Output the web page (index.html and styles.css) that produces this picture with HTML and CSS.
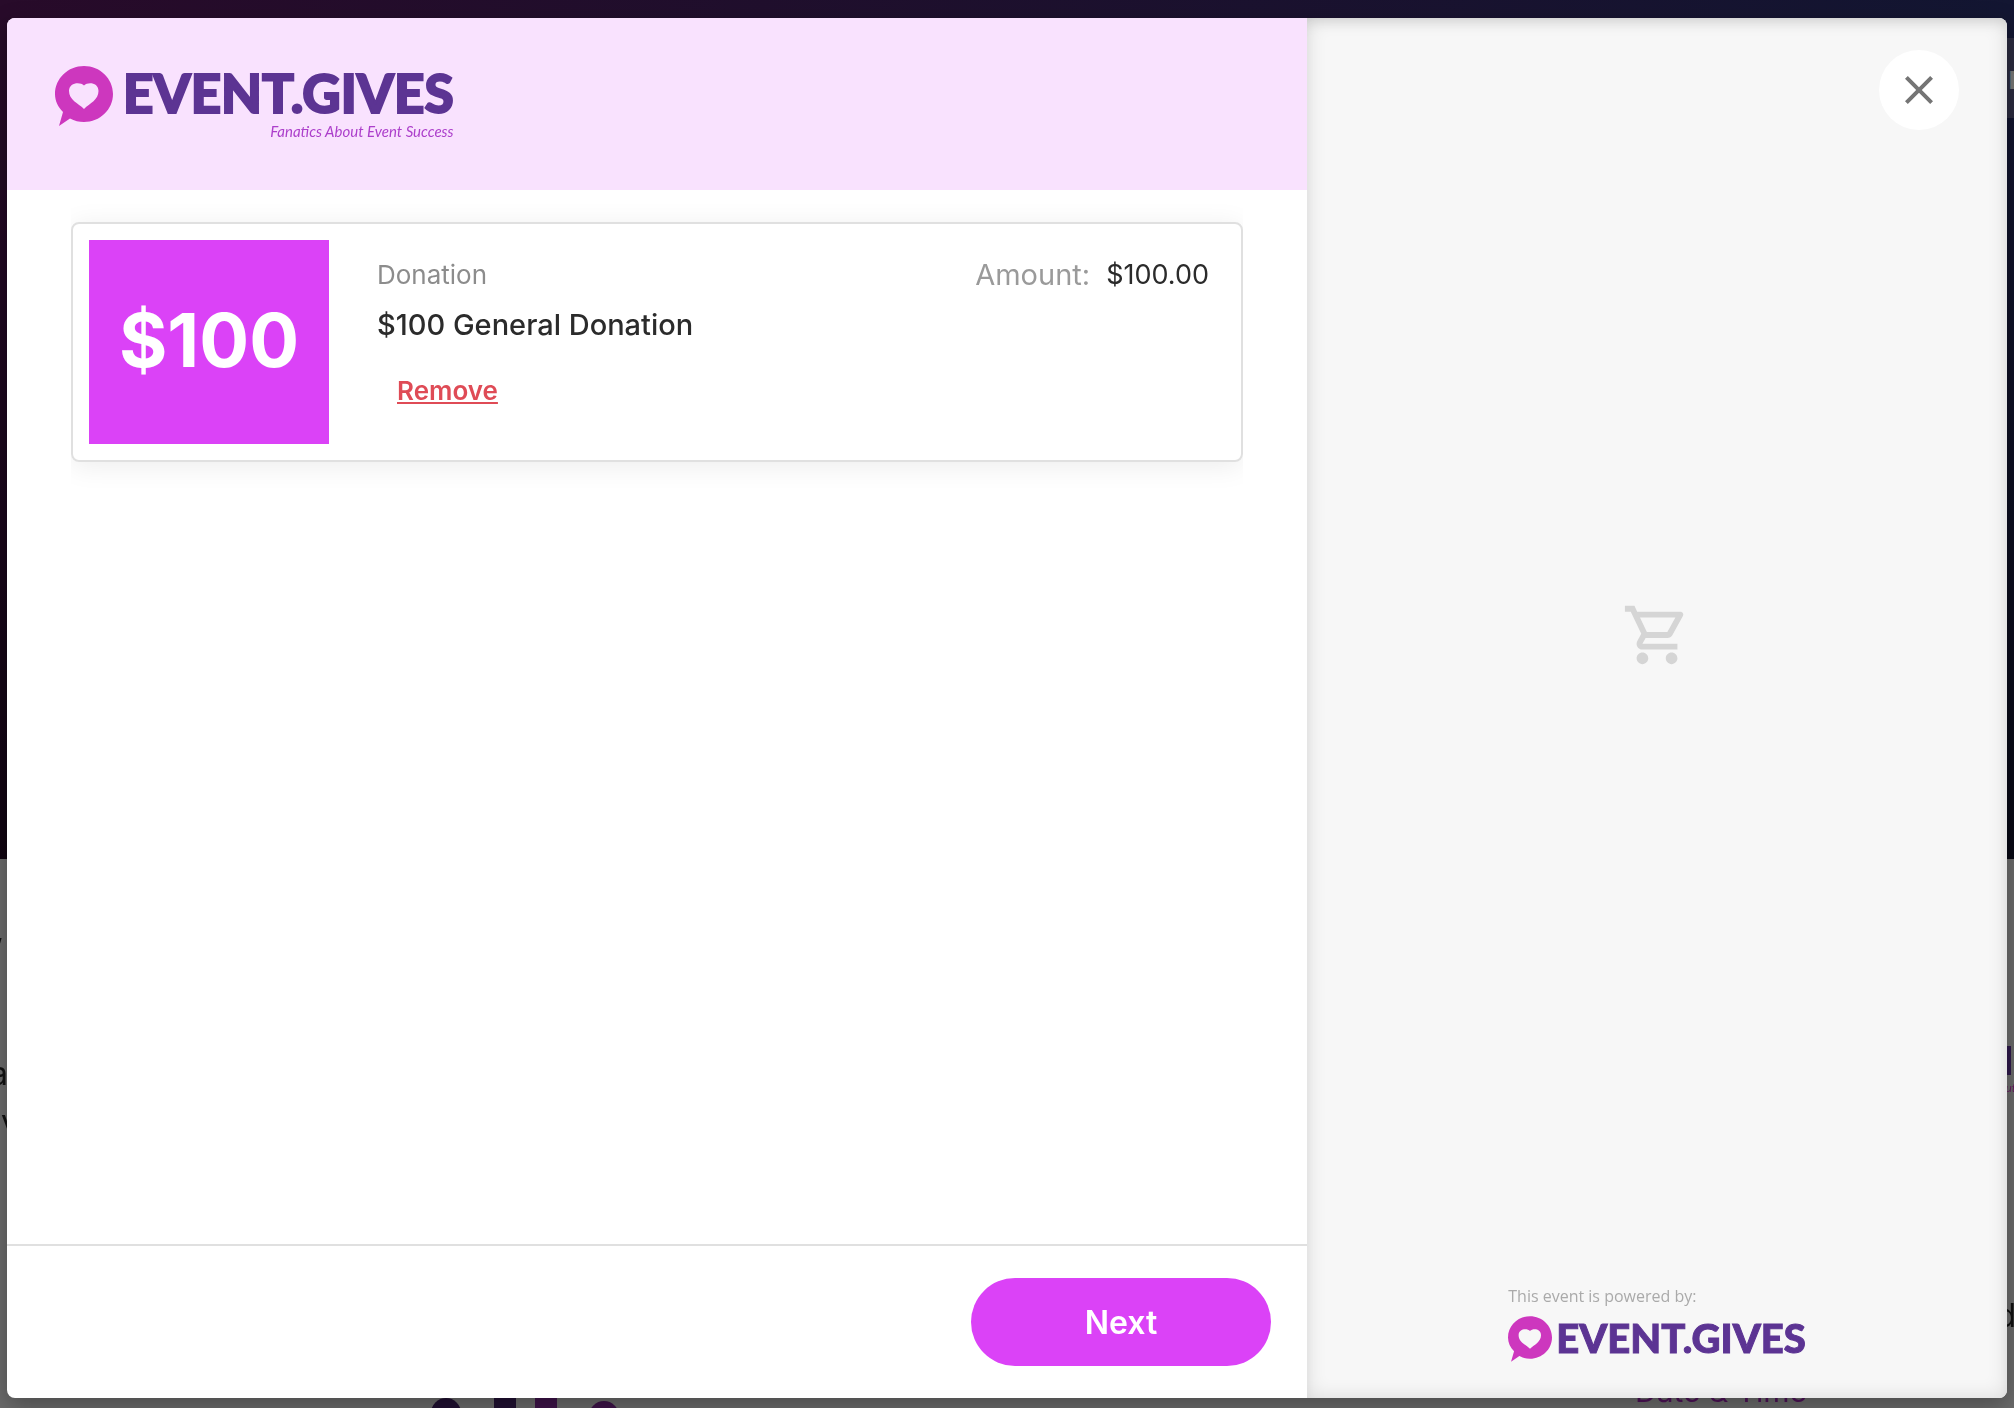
FILE: index.html
```html
<!DOCTYPE html>
<html lang="en">
<head>
<meta charset="utf-8">
<meta name="viewport" content="width=device-width, initial-scale=1">
<title>Cart – Event.Gives</title>
<link rel="stylesheet" href="styles.css">
</head>
<body>
<svg class="sprite" aria-hidden="true">
  <symbol id="bubble" viewBox="0 0 58 60">
    <path fill="#cd37be" fill-rule="evenodd" d="M29 0C45 0 58 12.500 58 28S45 56 29 56c-5 0-9.500-1-14-3.500L4 60l4-14C3 41 0 35 0 28 0 12.500 13 0 29 0zM29 19.500c-4-4-15-3-15 5.500C14 34 23 37 29 43c6-6 14.500-9 14.500-18 0-8.500-10.500-9.500-14.500-5.500z"/>
  </symbol>
</svg>

<div class="page" aria-hidden="true">
  <div class="hero"></div>
  <span class="peek nav-button">n</span>
  <span class="peek copy copy-comma">,</span>
  <span class="peek copy copy-a">a</span>
  <span class="peek copy copy-v">v</span>
  <span class="peek side-logo"></span>
  <span class="peek side-tagline">ut</span>
  <span class="peek copy copy-d">d</span>
  <span class="peek date-heading">Date &amp; Time</span>
  <svg class="peek artwork" viewBox="0 0 190 10">
    <g fill="#201032"><circle cx="15" cy="15" r="15"/><path d="M63 0h22v10H63z"/></g>
    <g fill="#3e1349"><path d="M104 0h22v10h-22z"/><circle cx="173" cy="18" r="15"/></g>
  </svg>
</div>

<div class="overlay">
  <div class="modal" role="dialog" aria-modal="true" aria-label="Cart">
    <main class="cart">
      <header class="cart-header">
        <div class="logo">
          <svg class="logo-mark"><use href="#bubble"/></svg>
          <div class="logo-text">
            <span class="logo-name">EVENT.GIVES</span>
            <span class="logo-tagline">Fanatics About Event Success</span>
          </div>
        </div>
      </header>

      <section class="cart-items">
        <article class="item">
          <div class="item-image">$100</div>
          <div class="item-info">
            <p class="item-type">Donation</p>
            <h2 class="item-title">$100 General Donation</h2>
            <button type="button" class="remove">Remove</button>
          </div>
          <p class="item-amount"><span class="amount-label">Amount:</span><span>$100.00</span></p>
        </article>
      </section>

      <footer class="cart-footer">
        <button type="button" class="next">Next</button>
      </footer>
    </main>

    <aside class="summary">
      <button type="button" class="close" aria-label="Close">
        <svg viewBox="0 0 24 24"><path d="M19 6.410 17.590 5 12 10.590 6.410 5 5 6.410 10.590 12 5 17.590 6.410 19 12 13.410 17.590 19 19 17.590 13.410 12z"/></svg>
      </button>
      <div class="summary-body">
        <svg class="cart-icon" viewBox="0 0 24 24"><path d="M15.550 13c.75 0 1.410-.41 1.750-1.030l3.580-6.490c.37-.66-.11-1.480-.87-1.480H5.210l-.94-2H1v2h2l3.600 7.590-1.350 2.440C4.520 15.370 5.480 17 7 17h12v-2H7l1.100-2h7.450zM6.160 6h12.150l-2.760 5H8.530L6.160 6zM7 18c-1.100 0-1.990.9-1.990 2S5.900 22 7 22s2-.9 2-2-.9-2-2-2zm10 0c-1.100 0-1.990.9-1.990 2s.89 2 1.990 2 2-.9 2-2-.9-2-2-2z"/></svg>
      </div>
      <footer class="powered">
        <div class="powered-inner">
          <p class="powered-label">This event is powered by:</p>
          <div class="logo logo-small">
            <svg class="logo-mark"><use href="#bubble"/></svg>
            <span class="logo-name">EVENT.GIVES</span>
          </div>
        </div>
      </footer>
    </aside>
  </div>
</div>
</body>
</html>
```
FILE: styles.css
```css
*,
*::before,
*::after {
  box-sizing: border-box;
}

body {
  margin: 0;
  background: #6b6b6b;
  color: #2b2b2b;
  font-family: Inter, "Open Sans", sans-serif;
}

p,
h2 {
  margin: 0;
}

button {
  border: 0;
  font-family: inherit;
  cursor: pointer;
}

.sprite {
  position: absolute;
  width: 0;
  height: 0;
}

/* Dimmed event page behind the dialog */
.page {
  position: fixed;
  inset: 0;
  overflow: hidden;
}

.hero {
  height: 61%;
  background:
    linear-gradient(to bottom, rgba(0, 0, 0, 0) 0%, rgba(0, 0, 0, 0.6) 100%),
    linear-gradient(to right, #280b2a, #131632);
}

.peek {
  position: absolute;
}

.nav-button {
  top: 38px;
  right: -80px;
  width: 90px;
  height: 80px;
  padding-left: 4px;
  background: #2b2b3f;
  color: #777;
  font-size: 32px;
  font-weight: 600;
  line-height: 80px;
}

.copy {
  color: #111;
  font-size: 32px;
  line-height: 40px;
}

.copy-comma { top: 910px; left: -5px; }
.copy-a { top: 1054px; left: -10px; }
.copy-v { top: 1102px; left: 1px; }
.copy-d { top: 1296px; right: -2px; }

.side-logo {
  top: 1046px;
  right: 3px;
  width: 8px;
  height: 29px;
  background: #2e184a;
}

.side-tagline {
  top: 1082px;
  right: -2px;
  color: #661b5f;
  font: italic 12px/12px Lato, sans-serif;
}

.date-heading {
  top: 1371px;
  left: 1635px;
  color: #4f1259;
  font-size: 30px;
  line-height: 40px;
  white-space: nowrap;
}

.artwork {
  bottom: 0;
  left: 431px;
  width: 190px;
  height: 10px;
}

/* Dialog */
.overlay {
  position: relative;
  display: flex;
  min-height: 100vh;
  padding: 18px 7px 10px;
}

.modal {
  display: grid;
  flex: 1;
  grid-template-columns: 65fr 35fr;
  overflow: hidden;
  border-radius: 8px;
  background: #fff;
  box-shadow: 0 8px 24px rgba(0, 0, 0, 0.3);
}

.cart {
  display: flex;
  flex-direction: column;
}

.cart-header {
  padding: 48px;
  background: #f9e2fe;
}

.logo {
  display: flex;
  gap: 10px;
}

.logo-mark {
  flex: none;
  width: 58px;
  height: 60px;
}

.logo-text {
  display: flex;
  flex-direction: column;
  align-items: flex-end;
}

.logo-name {
  color: #5c3493;
  font-family: Lato, sans-serif;
  font-size: 53px;
  font-weight: 900;
  line-height: 54px;
  -webkit-text-stroke: 2px #5c3493;
}

.logo-tagline {
  color: #ac3fcb;
  font-family: Lato, sans-serif;
  font-size: 15px;
  font-style: italic;
  line-height: 22px;
}

.cart-items {
  flex: 1;
  padding: 32px 64px;
}

.item {
  display: flex;
  padding: 16px;
  border: 2px solid #e0e0e0;
  border-radius: 8px;
  box-shadow: 0 4px 28px rgba(0, 0, 0, 0.08);
  clip-path: inset(-32px 0);
}

.item-image {
  display: flex;
  align-items: center;
  justify-content: center;
  width: 240px;
  height: 204px;
  padding-bottom: 4px;
  background: #db42f7;
  color: #fff;
  font-size: 74px;
  font-weight: 700;
}

.item-info {
  flex: 1;
  padding: 10px 48px;
}

.item-type {
  color: #8c8c8c;
  font-size: 26px;
  line-height: 50px;
}

.item-title {
  font-size: 29px;
  font-weight: 500;
  line-height: 50px;
}

.remove {
  margin-top: 16px;
  padding: 0 20px;
  background: none;
  color: #df4b56;
  font-size: 26px;
  font-weight: 600;
  line-height: 50px;
  text-decoration: underline;
}

.item-amount {
  display: flex;
  gap: 16px;
  padding: 10px 16px;
  font-size: 27px;
  line-height: 50px;
}

.amount-label {
  color: #9a9a9a;
  font-size: 29px;
}

.cart-footer {
  display: flex;
  justify-content: flex-end;
  padding: 32px 36px;
  border-top: 2px solid #e0e0e0;
}

.next {
  width: 300px;
  height: 88px;
  border-radius: 44px;
  background: #db42f7;
  color: #fff;
  font-size: 32px;
  font-weight: 600;
}

.summary {
  position: relative;
  display: flex;
  flex-direction: column;
  background: #f7f7f7;
  box-shadow: inset 0 8px 16px -8px rgba(0, 0, 0, 0.14), inset 0 0 20px rgba(0, 0, 0, 0.12);
}

.close {
  position: absolute;
  top: 32px;
  right: 48px;
  width: 80px;
  height: 80px;
  padding: 16px;
  border-radius: 50%;
  background: #fff;
}

.close svg {
  display: block;
  fill: #757575;
}

.summary-body {
  display: flex;
  flex: 1;
  align-items: center;
  justify-content: center;
}

.cart-icon {
  width: 70px;
  height: 70px;
  fill: #d5d5d5;
}

.powered {
  display: flex;
  justify-content: center;
  padding: 32px 0 36px;
}

.powered-label {
  color: #aaa;
  font-family: "Open Sans", sans-serif;
  font-size: 16px;
  line-height: 24px;
}

.logo-small {
  gap: 4px;
  padding-top: 8px;
}

.logo-small .logo-mark {
  width: 44px;
  height: 46px;
}

.logo-small .logo-name {
  font-size: 40px;
  line-height: 44px;
  -webkit-text-stroke-width: 1px;
}
```
